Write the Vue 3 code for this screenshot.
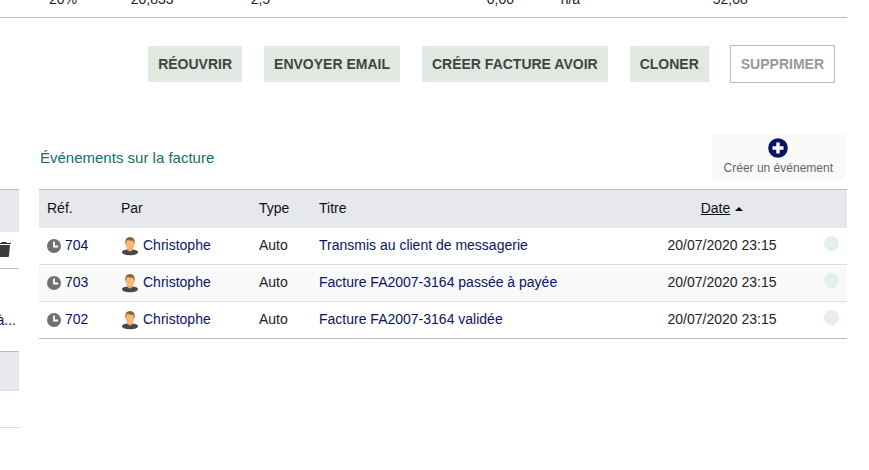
<template>
  <div class="page">
    <div class="lines">
      <table class="lines-table">
        <tbody>
          <tr>
            <td class="c-vat">20%</td>
            <td class="c-unit">20,833</td>
            <td class="c-unit">2,5</td>
            <td class="c-cost">0,00</td>
            <td class="c-rate">n/a</td>
            <td class="c-total">52,08</td>
            <td></td>
          </tr>
        </tbody>
      </table>
    </div>

    <div class="actions">
      <button v-for="a in actions" :key="a.label" type="button" class="action" :disabled="a.disabled">{{ a.label }}</button>
    </div>

    <div class="columns">
      <!-- Linked files, cut by the left edge -->
      <aside class="files">
        <div class="files-head"></div>
        <div class="files-row">
          <button type="button" class="trash" aria-label="Supprimer">
            <svg width="14" height="16" viewBox="0 0 14 16">
              <path d="M0 2h4l1-1h4l1 1h4v1H0z" fill="#333" />
              <path d="M1 4h12l-1 11q0 1-1 1H3q-1 0-1-1z" fill="#3d3b3b" />
            </svg>
          </button>
        </div>
        <div class="files-link"><a href="#">à...</a></div>
        <div class="files-subhead"></div>
        <div class="files-empty"></div>
      </aside>

      <section class="events">
        <div class="events-title">
          <h2>Événements sur la facture</h2>
          <a href="#" class="create">
            <svg width="20" height="20" viewBox="0 0 20 20">
              <circle cx="10" cy="10" r="9.8" fill="#0a1464" />
              <path d="M8.3 4.5h3.4v3.8h3.8v3.4h-3.8v3.8H8.3v-3.8H4.5V8.3h3.8z" fill="#fff" />
            </svg>
            <span>Créer un événement</span>
          </a>
        </div>

        <table class="events-table">
          <thead>
            <tr>
              <th class="c-ref">Réf.</th>
              <th class="c-user">Par</th>
              <th class="c-type">Type</th>
              <th>Titre</th>
              <th class="c-date"><a href="#">Date</a><i class="sort"></i></th>
              <th class="c-status"></th>
            </tr>
          </thead>
          <tbody>
            <tr v-for="e in events" :key="e.ref">
              <td>
                <a href="#" class="with-icon">
                  <svg width="14" height="14" viewBox="0 0 14 14">
                    <circle cx="7" cy="7" r="7" fill="#707070" />
                    <path d="M7 2.5v5h4.2" fill="none" stroke="#fff" stroke-width="1.8" />
                  </svg>
                  {{ e.ref }}
                </a>
              </td>
              <td>
                <a href="#" class="with-icon">
                  <svg width="18" height="20" viewBox="0 0 18 20">
                    <path d="M1 15.5Q2 13.8 6 13.500h6q4 .3 5 2 .5 3.800-8 3.800T1 15.500z" fill="#48484a" />
                    <path d="M6 10h6v3.500Q9 17.500 6 13.500z" fill="#eda65f" />
                    <ellipse cx="9" cy="7.600" rx="4.500" ry="5.800" fill="#f6b878" />
                    <path d="M4.400 8Q3.500 1 9 1t4.600 7l-.9-.9-.5-2.600Q9 5.200 6.500 3.800L5.400 5.500l-.2 1.700z" fill="#85643c" />
                  </svg>
                  {{ e.user }}
                </a>
              </td>
              <td>{{ e.type }}</td>
              <td><a href="#">{{ e.title }}</a></td>
              <td class="c-date">{{ e.date }}</td>
              <td class="c-status"><span class="dot"></span></td>
            </tr>
          </tbody>
        </table>
      </section>
    </div>
  </div>
</template>

<script setup>
import { ref } from "vue";

const actions = ref([
  { label: "RÉOUVRIR", disabled: false },
  { label: "ENVOYER EMAIL", disabled: false },
  { label: "CRÉER FACTURE AVOIR", disabled: false },
  { label: "CLONER", disabled: false },
  { label: "SUPPRIMER", disabled: true },
]);

const events = ref([
  { ref: "704", user: "Christophe", type: "Auto", title: "Transmis au client de messagerie", date: "20/07/2020 23:15" },
  { ref: "703", user: "Christophe", type: "Auto", title: "Facture FA2007-3164 passée à payée", date: "20/07/2020 23:15" },
  { ref: "702", user: "Christophe", type: "Auto", title: "Facture FA2007-3164 validée", date: "20/07/2020 23:15" },
]);
</script>

<style>
body {
  background: #fff;
}
</style>

<style scoped>
.page {
  padding-right: 22px;
  font-family: "Liberation Sans", Arial, sans-serif;
  font-size: 14px;
  line-height: 16px;
  color: #222;
}

a {
  color: #0a1464;
  text-decoration: none;
}

svg {
  display: block;
  flex: none;
}

table {
  width: 100%;
  border-collapse: collapse;
  table-layout: fixed;
}

/* Invoice lines: only the end of the last one shows */
.lines {
  display: flex;
  align-items: flex-end;
  height: 17px;
  overflow: hidden;
  border-bottom: 1px solid #bbb;
}
.lines-table td {
  padding: 0 0 10px;
  text-align: right;
}
.c-vat { width: 9.1%; }
.c-unit { width: 11.4%; }
.c-cost { width: 28.8%; }
.c-rate { width: 7.8%; }
.c-total { width: 19.8%; }

.actions {
  display: flex;
  justify-content: flex-end;
  gap: 20px;
  margin-top: 27px;
  padding-right: 12px;
}
.action {
  padding: 10px;
  border: 1px solid transparent;
  background: #e1e7e1;
  background-clip: padding-box;
  font: bold 14px/16px "Liberation Sans", Arial, sans-serif;
  color: #444;
  white-space: nowrap;
}
.action:disabled {
  border-color: #bbb;
  background: #fff;
  color: #999;
}

.columns {
  display: flex;
  gap: 20px;
  margin-top: 51px;
}

.files {
  flex: 0 0 19px;
  margin-top: 55px;
  overflow: hidden;
}
.files-head {
  height: 42px;
  border-top: 1px solid #bbb;
  background: #e6e8ed;
}
.files-row,
.files-link {
  display: flex;
  justify-content: flex-end;
  align-items: center;
}
.files-row {
  height: 34px;
  padding: 0 8px 2px 0;
  border-bottom: 1px solid #bbb;
}
.trash {
  padding: 0;
  border: 0;
  background: none;
}
.files-link {
  height: 82px;
  padding-right: 3px;
  padding-top: 20px;
  box-sizing: border-box;
}
.files-subhead {
  height: 38px;
  border-top: 1px solid #bbb;
  border-bottom: 1px solid #ddd;
  background: #e6e8ed;
}
.files-empty {
  height: 36px;
  border-bottom: 1px solid #ddd;
}

.events {
  flex: 1;
  min-width: 0;
}
.events-title {
  display: flex;
  justify-content: space-between;
  align-items: center;
  padding: 0 2px 9px 1px;
}
h2 {
  margin: 0;
  padding-top: 2px;
  font-size: 15px;
  font-weight: normal;
  color: #176b6b;
}
.create {
  display: flex;
  flex-direction: column;
  align-items: center;
  padding: 4px 12px 2px;
  background: #fafafa;
  font-size: 12px;
  line-height: 20px;
  color: #666;
}

.events-table {
  border-collapse: separate;
  border-spacing: 0;
  border-top: 1px solid #bbb;
  border-bottom: 1px solid #bbb;
}
th,
.events-table td {
  padding: 0 8px 2px;
  text-align: left;
  font-weight: normal;
}
th {
  height: 36px;
  background: #e6e8ed;
  color: #111;
}
.events-table td {
  height: 34px;
  border-bottom: 1px solid #ddd;
}
.events-table tr:last-child td {
  border-bottom: 0;
}
.events-table tbody tr:nth-child(even) {
  background: #f9f9f9;
}
.c-ref { width: 58px; }
.c-user { width: 122px; }
.c-type { width: 44px; }
.events-table .c-date {
  width: 148px;
  text-align: center;
}
.events-table .c-status {
  width: 27px;
}
.events-table td.c-status {
  padding-bottom: 5px;
  height: 31px;
}
.c-date a {
  color: #111;
  text-decoration: underline;
}
.sort {
  display: inline-block;
  margin-left: 5px;
  vertical-align: middle;
  border: 4px solid transparent;
  border-top: 0;
  border-bottom-color: #000;
}
.with-icon {
  display: flex;
  align-items: center;
  gap: 4px;
}
.with-icon svg {
  margin-top: 2px;
}
.dot {
  display: block;
  width: 15px;
  height: 15px;
  margin-left: auto;
  border-radius: 50%;
  background: #e4efeb;
}
</style>
